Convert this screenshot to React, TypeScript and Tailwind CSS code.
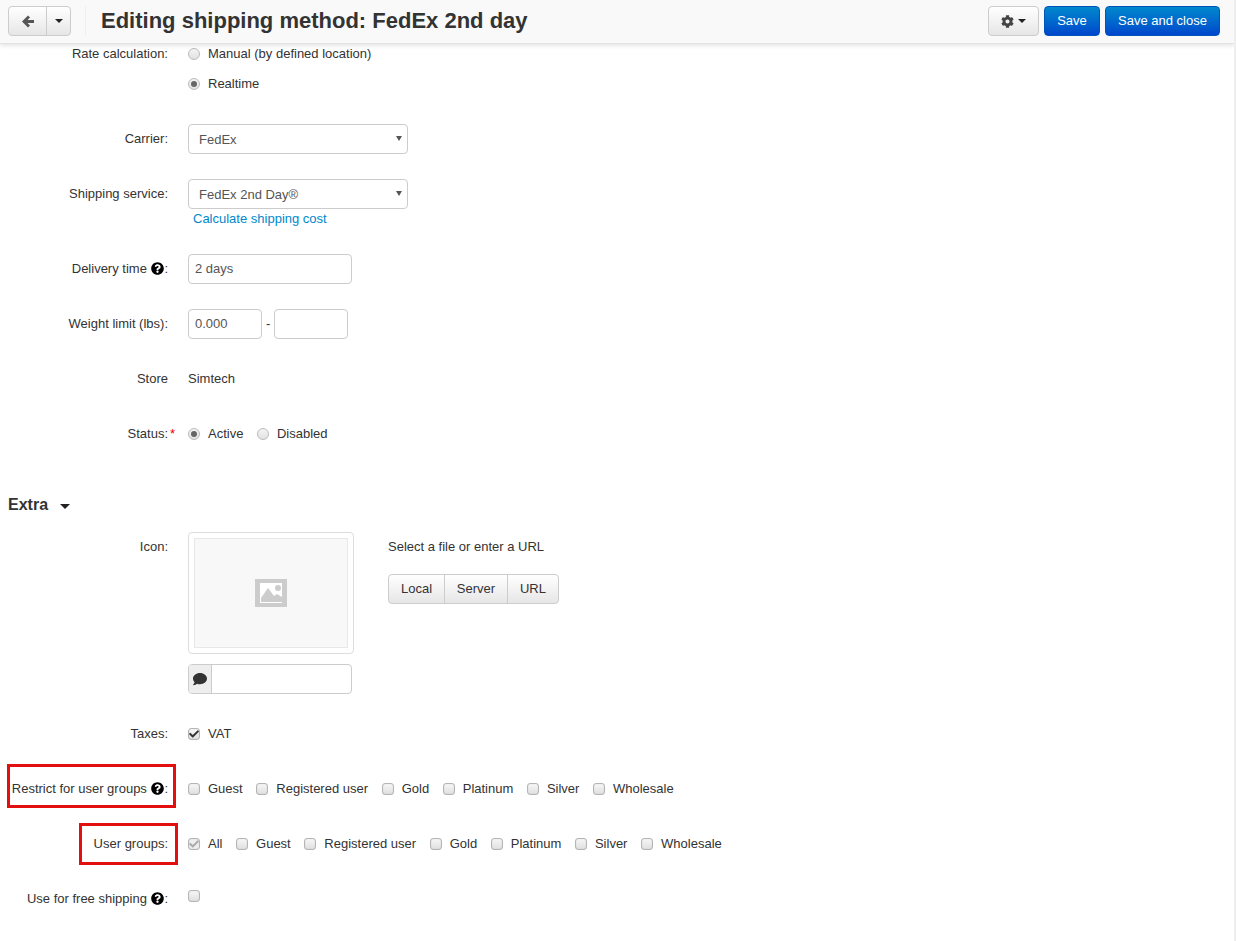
import type { ReactNode } from "react";
import { FaCheck, FaCog, FaComment, FaQuestionCircle } from "react-icons/fa";

const Caret = ({ className = "" }: { className?: string }) => (
  <span className={`inline-block h-0 w-0 border-x-4 border-t-4 border-x-transparent border-t-[#222] ${className}`} />
);

const Help = () => <FaQuestionCircle className="mb-[2px] ml-[4.5px] inline-block size-[13px] align-middle text-black" />;

function Radio({ checked }: { checked?: boolean }) {
  return (
    <span className="flex size-3 shrink-0 items-center justify-center rounded-full border border-[#bbb] bg-gradient-to-b from-[#f4f4f4] to-[#e2e2e2]">
      {checked && <span className="size-1.5 rounded-full bg-[#666]" />}
    </span>
  );
}

function Checkbox({ checked, disabled }: { checked?: boolean; disabled?: boolean }) {
  return (
    <span className={`flex size-3 shrink-0 items-center justify-center rounded-[3px] border border-[#b5b5b5] shadow-[inset_0_0_1px_rgba(0,0,0,0.2)] ${disabled ? "bg-[#eee]" : "bg-gradient-to-b from-[#f6f6f6] to-[#e0e0e0]"}`}>
      {checked && <FaCheck className={`size-[10px] ${disabled ? "text-[#aaa]" : "text-[#333]"}`} />}
    </span>
  );
}

function Option({ label, checked, disabled, radio }: { label: string; checked?: boolean; disabled?: boolean; radio?: boolean }) {
  return (
    <span className="flex items-center gap-[8px]">
      {radio ? <Radio checked={checked} /> : <Checkbox checked={checked} disabled={disabled} />}
      <span>{label}</span>
    </span>
  );
}

function Row({ label, children, className = "h-[30px] mb-[25px]" }: { label: ReactNode; children: ReactNode; className?: string }) {
  return (
    <div className={`flex ${className}`}>
      <div className="w-[168px] shrink-0 pt-[6px] text-right leading-[18px]">{label}</div>
      <div className="ml-[20px] min-w-0 flex-1">{children}</div>
    </div>
  );
}

const Select = ({ value }: { value: string }) => (
  <div className="flex h-[30px] w-[220px] items-center justify-between rounded border border-[#ccc] bg-white pl-[10px] pr-[5px] text-[#555]">
    <span className="pt-px">{value}</span>
    <span className="mb-px h-0 w-0 border-x-[3px] border-t-[5px] border-x-transparent border-t-[#555]" />
  </div>
);

const Input = ({ value, className }: { value?: string; className: string }) => (
  <div className={`flex h-[30px] items-center rounded border border-[#ccc] bg-white px-[6px] text-[#555] ${className}`}>{value}</div>
);

const GroupOptions = ({ withAll }: { withAll?: boolean }) => (
  <div className="flex h-[30px] items-center gap-[13.6px]">
    {withAll && <Option label="All" checked disabled />}
    {["Guest", "Registered user", "Gold", "Platinum", "Silver", "Wholesale"].map((g) => (
      <Option key={g} label={g} />
    ))}
  </div>
);

const toolBtn = "flex h-[30px] items-center justify-center border border-[#ccc] bg-gradient-to-b from-white to-[#e6e6e6] text-[#333]";
const primaryBtn = "flex h-[30px] items-center justify-center rounded border border-[#0055b8] bg-gradient-to-b from-[#0088cc] to-[#0044cc] text-white";

export default function App() {
  return (
    <div className="h-[941px] overflow-hidden border-r-2 border-[#eee] bg-white font-['Liberation_Sans',Arial,sans-serif] text-[13px] text-[#333]">
      <header className="relative z-10 flex h-[44px] items-center border-b border-[#e3e3e3] bg-[#f9f9f9] pb-px pl-2 pr-[14px] shadow-[0_2px_4px_rgba(0,0,0,0.1)]">
        <div className="flex">
          <button className={`${toolBtn} w-[39px] rounded-l`}>
            <svg width="12" height="13" viewBox="0 0 12 13" fill="#555">
              <path d="M0 6.5 6 .5 8 2.5 5.5 5H12V8H5.5L8 10.5 6 12.5Z" />
            </svg>
          </button>
          <button className={`${toolBtn} -ml-px w-[25px] rounded-r`}>
            <Caret />
          </button>
        </div>
        <h1 className="ml-[14px] border-l border-[#f0f0f0] pl-[15px] text-[22px] font-bold leading-[30px] text-[#333]">
          Editing shipping method: FedEx 2nd day
        </h1>
        <div className="ml-auto flex gap-[5px]">
          <button className={`${toolBtn} w-[51px] gap-1 rounded`}>
            <FaCog className="size-[13px] text-[#444]" />
            <Caret />
          </button>
          <button className={`${primaryBtn} w-[56px]`}>Save</button>
          <button className={`${primaryBtn} w-[115px]`}>Save and close</button>
        </div>
      </header>

      <main>
        <div className="flex h-[80px] pt-px">
          <div className="w-[168px] shrink-0 text-right leading-[18px]">Rate calculation:</div>
          <div className="ml-[20px] flex flex-col gap-3">
            <div className="flex h-[18px] items-center"><Option radio label="Manual (by defined location)" /></div>
            <div className="flex h-[18px] items-center"><Option radio checked label="Realtime" /></div>
          </div>
        </div>

        <Row label="Carrier:"><Select value="FedEx" /></Row>

        <Row label="Shipping service:" className="mb-[25px] h-[50px]">
          <Select value="FedEx 2nd Day®" />
          <a className="ml-[5px] mt-px block leading-[18px] text-[#0088cc]">Calculate shipping cost</a>
        </Row>

        <Row label={<>Delivery time<Help />:</>}><Input value="2 days" className="w-[164px]" /></Row>

        <Row label="Weight limit (lbs):">
          <div className="flex items-center gap-[4px]">
            <Input value="0.000" className="w-[74px]" />
            <span className="w-[4px]">-</span>
            <Input className="w-[74px]" />
          </div>
        </Row>

        <Row label="Store"><div className="pt-[6px] leading-[18px]">Simtech</div></Row>

        <Row
          label={
            <span className="relative inline-block">
              Status:
              <span className="absolute -right-[7px] top-0 text-[#e00]">*</span>
            </span>
          }
          className="mb-[44px] h-[30px]"
        >
          <div className="flex h-[30px] items-center gap-[13.5px]">
            <Option radio checked label="Active" />
            <Option radio label="Disabled" />
          </div>
        </Row>

        <h2 className="mb-[15px] flex h-[24px] items-center pl-2 text-base font-bold leading-6">
          Extra
          <span className="ml-3 mt-0.5 h-0 w-0 border-x-[5px] border-t-[5px] border-x-transparent border-t-[#222]" />
        </h2>

        <Row label="Icon:" className="mb-[25px]">
          <div className="flex">
            <div>
              <div className="flex h-[122px] w-[166px] rounded border border-[#ddd] p-[5px]">
                <div className="flex flex-1 items-center justify-center border border-[#e8e8e8] bg-[#f8f8f8]">
                  <svg width="32" height="28" viewBox="0 0 32 28">
                    <rect x="4" y="3" width="24" height="22" fill="#fff" />
                    <path fillRule="evenodd" fill="#ccc" d="M0 0h32v28H0zM5 4v20h22V4z" />
                    <circle cx="23" cy="9" r="3" fill="#ccc" />
                    <path fill="#ccc" d="M6 23v-4l7-10 6 8 3-2 5 3v5z" />
                  </svg>
                </div>
              </div>
              <div className="mt-[10px] flex h-[30px] w-[164px] overflow-hidden rounded border border-[#ccc]">
                <span className="flex w-[23px] items-center justify-center border-r border-[#ccc] bg-[#eee]">
                  <FaComment className="size-[14px] text-[#333]" />
                </span>
              </div>
            </div>
            <div className="ml-[34px] pt-[6px]">
              <div className="leading-[18px]">Select a file or enter a URL</div>
              <div className="mt-[18px] flex">
                <button className={`${toolBtn} w-[57px] rounded-l`}>Local</button>
                <button className={`${toolBtn} -ml-px w-[64px]`}>Server</button>
                <button className={`${toolBtn} -ml-px w-[52px] rounded-r`}>URL</button>
              </div>
            </div>
          </div>
        </Row>

        <Row label="Taxes:">
          <div className="flex h-[30px] items-center"><Option label="VAT" checked /></div>
        </Row>

        <Row
          label={
            <span className="relative inline-block">
              Restrict for user groups<Help />:
              <span className="absolute -bottom-[10px] -left-[5px] -right-[8px] -top-[16px] border-[3px] border-[#e30e0e]" />
            </span>
          }
        >
          <GroupOptions />
        </Row>

        <Row
          label={
            <span className="relative inline-block">
              User groups:
              <span className="absolute -bottom-[12px] -left-[15px] -right-[10px] -top-[12px] border-[3px] border-[#e30e0e]" />
            </span>
          }
        >
          <GroupOptions withAll />
        </Row>

        <Row label={<>Use for free shipping<Help />:</>}>
          <div className="flex h-[24px] items-center"><Checkbox /></div>
        </Row>
      </main>
    </div>
  );
}
